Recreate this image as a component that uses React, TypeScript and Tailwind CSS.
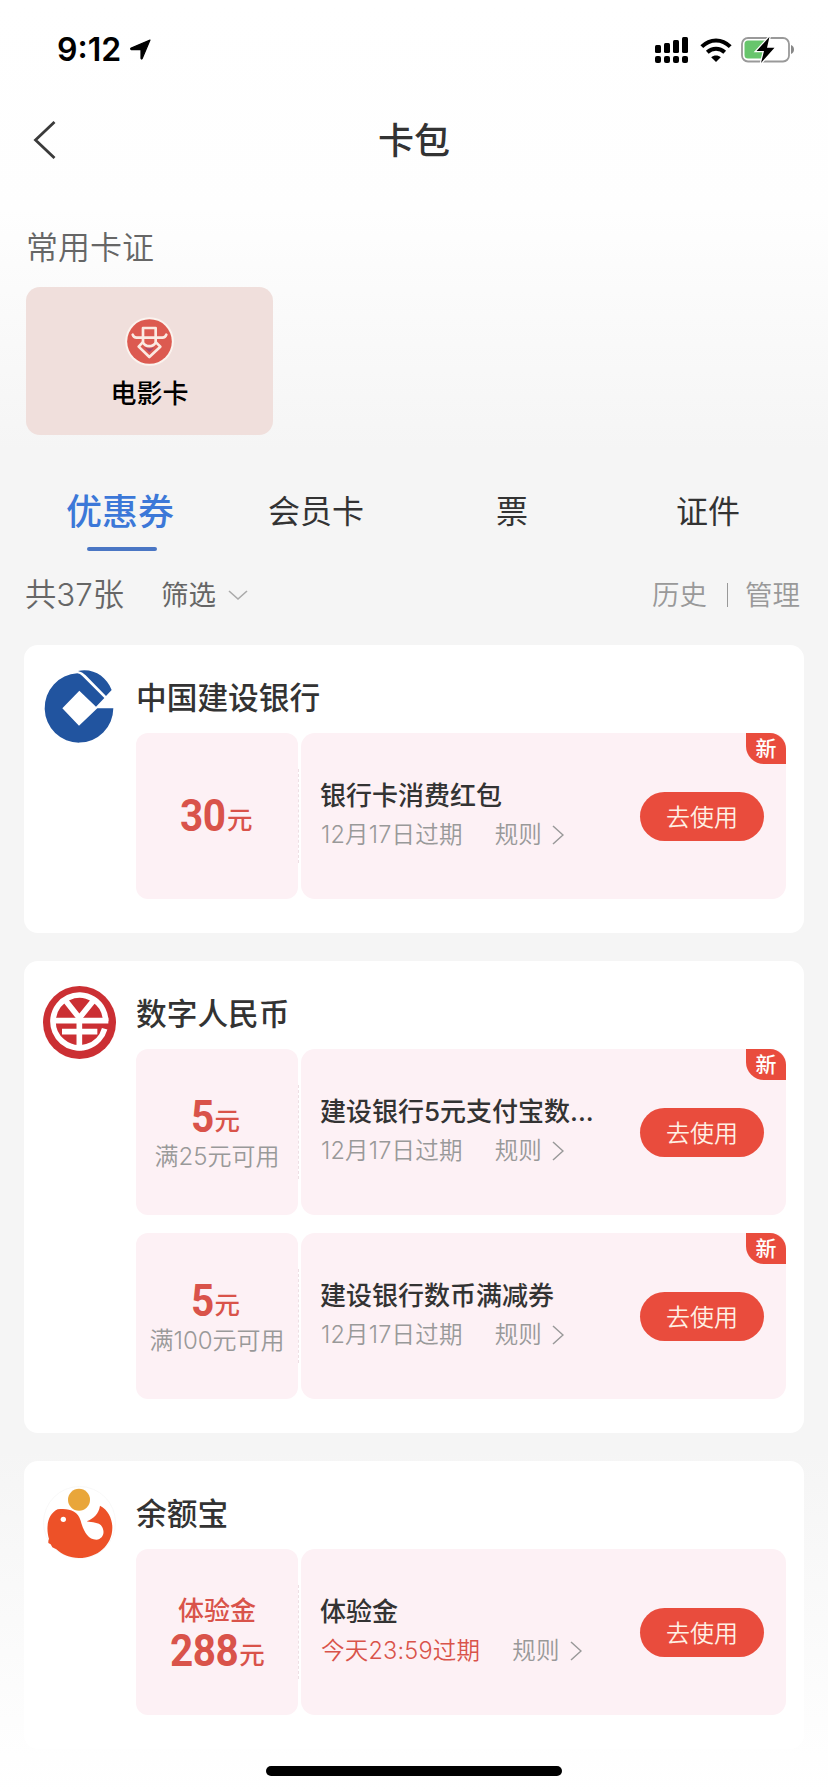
import type { ReactNode } from 'react'

type Coupon = {
  amount: string
  label?: string
  limit?: string
  title: string
  expire: string
  urgent?: boolean
  isNew?: boolean
}

type Group = {
  name: string
  logo: ReactNode
  coupons: Coupon[]
}

const tabs = ['优惠券', '会员卡', '票', '证件']

const groups: Group[] = [
  {
    name: '中国建设银行',
    logo: <BankLogo />,
    coupons: [{ amount: '30', title: '银行卡消费红包', expire: '12月17日过期', isNew: true }],
  },
  {
    name: '数字人民币',
    logo: <RmbLogo />,
    coupons: [
      { amount: '5', limit: '满25元可用', title: '建设银行5元支付宝数...', expire: '12月17日过期', isNew: true },
      { amount: '5', limit: '满100元可用', title: '建设银行数币满减券', expire: '12月17日过期', isNew: true },
    ],
  },
  {
    name: '余额宝',
    logo: <WhaleLogo />,
    coupons: [{ amount: '288', label: '体验金', title: '体验金', expire: '今天23:59过期', urgent: true }],
  },
]

export default function App() {
  return (
    <div className="relative w-[828px] h-[1792px] overflow-hidden bg-[linear-gradient(180deg,#ffffff_0px,#fefefe_210px,#f5f5f5_450px,#f5f5f5_1450px,#fdfdfd_1720px,#ffffff_1792px)] font-['Inter','Noto_Sans_CJK_SC',sans-serif] text-[#333]">
      <StatusBar />

      {/* 导航栏 */}
      <header className="grid h-[84px] grid-cols-[1fr_auto_1fr] items-center px-[33px]">
        <svg className="w-6 h-[38px]" viewBox="0 0 24 38" fill="none" stroke="#3a3a3a" strokeWidth={2.8}>
          <path d="M21.5 1 2.5 19l19 18" />
        </svg>
        <h1 className="pt-[2px] text-[36px] leading-[44px] font-medium">卡包</h1>
      </header>

      {/* 常用卡证 */}
      <section className="pt-[46px] pl-[26px]">
        <h2 className="text-[32px] leading-10 font-[350] text-[#666]">常用卡证</h2>
        <div className="mt-[19px] flex h-[148px] w-[247px] flex-col items-center rounded-[14px] bg-[#f0dfdc] pt-[30px]">
          <MovieIcon />
          <span className="mt-[11px] text-[26px] leading-[34px] font-medium text-black">电影卡</span>
        </div>
      </section>

      {/* 分类标签 */}
      <nav className="mx-[22px] mt-[57px] grid h-[59px] grid-cols-4">
        {tabs.map((tab, i) => (
          <div key={tab} className="flex flex-col items-center">
            {i === 0 ? (
              <>
                <span className="text-[36px] leading-10 font-medium text-[#3c78d8]">{tab}</span>
                <span className="mt-[15px] ml-1 h-1 w-[70px] shrink-0 rounded-full bg-[#4a76c4]" />
              </>
            ) : (
              <span className="text-[32px] leading-10">{tab}</span>
            )}
          </div>
        ))}
      </nav>

      <div className="mt-6 flex h-10 items-center pr-[28px] pl-[25px] text-[#666]">
        <span className="text-[31.3px] leading-10 font-[350]">共37张</span>
        <span className="ml-[37px] text-[27.5px] leading-10">筛选</span>
        <svg className="ml-3 w-[20px] h-3" viewBox="0 0 20 12" fill="none" stroke="#aaa" strokeWidth={1.6}>
          <path d="m1 2 9 8 9-8" />
        </svg>
        <div className="ml-auto flex items-center text-[27.5px] leading-10 font-[350] text-[#999]">
          <span>历史</span>
          <span className="mr-[17px] ml-5 h-6 w-px bg-[#999]" />
          <span>管理</span>
        </div>
      </div>

      <main className="mt-[30px] flex flex-col gap-7 px-6">
        {groups.map((group) => (
          <section key={group.name} className="flex rounded-[14px] bg-white pt-6 pr-[18px] pb-[34px] pl-[19px]">
            <div className="w-[93px] shrink-0 pt-px">{group.logo}</div>
            <div className="flex-1">
              <h3 className="h-16 pt-[9px] text-[30.7px] leading-10 font-medium">{group.name}</h3>
              <div className="flex flex-col gap-[18px]">
                {group.coupons.map((coupon) => (
                  <CouponItem key={coupon.title} coupon={coupon} />
                ))}
              </div>
            </div>
          </section>
        ))}
      </main>

      <div className="absolute bottom-4 left-[266px] h-[10px] w-[296px] rounded-full bg-black" />
    </div>
  )
}

function CouponItem({ coupon }: { coupon: Coupon }) {
  return (
    <div className="relative flex h-[166px]">
      <div className="flex w-[162px] flex-col items-center justify-center rounded-[12px] bg-[#fdf1f5] text-[#d9534a]">
        {coupon.label && <span className="pt-[6px] text-[26px] leading-8 font-medium">{coupon.label}</span>}
        <div className="flex items-baseline pt-[5px] pr-[5px] leading-[38px]">
          <span className="origin-right scale-x-92 font-[Roboto] text-[44px] font-bold tracking-[-0.5px]">
            {coupon.amount}
          </span>
          <span className="ml-px -translate-y-[2px] text-[25.5px] font-medium">元</span>
        </div>
        {coupon.limit && (
          <span className="text-[24px] leading-[30px] font-[350] text-[#999]">{coupon.limit}</span>
        )}
      </div>

      {/* 虚线 */}
      <div className="my-9 w-[3px] border-l border-dashed border-[#eedfe4]" />

      <div className="flex flex-1 items-center rounded-[14px] bg-[#fdf1f5] pr-[22px] pl-[19px]">
        <div>
          <p className="text-[26px] leading-[38px] font-medium">{coupon.title}</p>
          <div className="flex items-center pl-px text-[23.5px] leading-10 font-[350] tracking-[0.2px] text-[#999]">
            <span className={coupon.urgent ? 'text-[#d9534a]' : ''}>{coupon.expire}</span>
            <span className="ml-8">规则</span>
            <svg className="ml-[10px] w-3 h-5" viewBox="0 0 12 20" fill="none" stroke="#999" strokeWidth={1.5}>
              <path d="m1 1 10 9-10 9" />
            </svg>
          </div>
        </div>
        <button className="ml-auto h-[49px] w-[124px] rounded-full bg-[#e94c3d] pt-[2px] text-[24px] leading-[47px] font-[350] text-[#fff0e4]">
          去使用
        </button>
      </div>

      {coupon.isNew && (
        <span className="absolute top-0 right-0 h-[31px] w-10 rounded-tr-[16px] rounded-bl-[18px] bg-[#e94c3d] pt-px text-center text-[21px] leading-[30px] font-medium text-white">
          新
        </span>
      )}
    </div>
  )
}

function StatusBar() {
  return (
    <div className="flex h-[98px] items-center pt-px pr-[33px] pl-[57px] text-black">
      <span className="text-[32px] leading-10 font-semibold">9:12</span>
      <svg className="ml-[9px] w-[21px] h-[21px]" viewBox="0 0 21 21" stroke="black" strokeWidth="1.2" strokeLinejoin="round">
        <path d="M20 1 12.200 19.600c-.3.700-1.200.500-1.200-.3v-8.700H1.400c-.9-.2-1-1.100-.2-1.500Z" />
      </svg>

      <div className="ml-auto flex items-center">
        <svg className="w-[33px] h-[26px]" viewBox="0 0 33 26">
          <rect x="0" y="8" width="6" height="8" rx="1.5" />
          <rect x="9" y="6" width="6" height="10" rx="1.5" />
          <rect x="18" y="3" width="6" height="13" rx="1.5" />
          <rect x="27" y="0" width="6" height="16" rx="1.5" />
          <rect x="0" y="19" width="6" height="7" rx="2" />
          <rect x="9" y="19" width="6" height="7" rx="2" />
          <rect x="18" y="19" width="6" height="7" rx="2" />
          <rect x="27" y="19" width="6" height="7" rx="2" />
        </svg>
        <svg className="ml-3 w-8 h-6" viewBox="0 0 32 24" fill="none" stroke="black" strokeWidth={4}>
          <path d="M1.800 8.600C10 .3 22 .3 30.200 8.600" />
          <path d="M7.300 14.200c5-4.700 12.400-4.700 17.400 0" />
          <path d="M16 24l-4.800-4.700c2.700-2.300 6.900-2.300 9.600 0Z" fill="black" stroke="none" />
        </svg>
        <svg className="ml-[9px] w-[54px] h-[27px]" viewBox="0 0 54 27">
          <rect x="1" y="2" width="47" height="23.500" rx="6" fill="none" stroke="#999" strokeWidth="1.800" />
          <path d="M50 9c4 1 4 8 0 9Z" fill="#888" />
          <path d="M7 4.500h17v18H7a3.500 3.500 0 0 1-3.500-3.500V8A3.500 3.500 0 0 1 7 4.500Z" fill="#67c56c" />
          <path
            d="M28.500.8 15.500 15H23l-3 12L33.500 11.700H26L28.500.8Z"
            fill="black"
            stroke="white"
            strokeWidth="2.500"
            paintOrder="stroke"
          />
        </svg>
      </div>
    </div>
  )
}

function MovieIcon() {
  return (
    <svg className="w-[49px] h-[49px]" viewBox="0 0 147 147">
      <circle cx="73.500" cy="73.500" r="73" fill="#fbf3ee" />
      <circle cx="73.500" cy="73.500" r="67" fill="#dc5a50" />
      <g fill="none" stroke="#fbeae2" strokeWidth="8" strokeLinejoin="round" strokeLinecap="round">
        <path d="M23 53c2 6 6 9 12 9h77c6 0 10-3 12-9" />
        <path d="M54 77V33h38v44c-8 14-30 14-38 0Z" />
        <path d="m53 76-12 13 32 31 33-31-13-13" />
      </g>
      <path d="M57 89c8 7 25 7 33 0l-17 17Z" fill="#a4486e" />
    </svg>
  )
}

function BankLogo() {
  return (
    <svg className="w-[73px] h-[73px]" viewBox="0 0 219 219" fill="#21549f">
      <path d="M103 10A103 104 0 1 0 211 115H163L108 167 58 115l51-53 50 48 25-26-66-66q-7-8-15-8Z" />
      <path d="M105 3c46-9 84 15 101 57l-17 18-61-62Q118 6 105 3Z" />
    </svg>
  )
}

function RmbLogo() {
  return (
    <svg className="w-[73px] h-[73px]" viewBox="0 0 219 219">
      <circle cx="109.500" cy="109.500" r="109.500" fill="#cb2f33" />
      <g fill="none" stroke="white" strokeWidth="17">
        <path d="M31 104h165" />
        <path d="M57 137h106" />
        <path d="M109 95v98" />
        <path d="m68 44 41 52 42-52" />
        <path d="M188 106A79 79 0 1 0 185 128" />
      </g>
    </svg>
  )
}

function WhaleLogo() {
  return (
    <svg className="w-[73px] h-[73px]" viewBox="0 0 219 219">
      <circle cx="109.500" cy="109.500" r="108" fill="none" stroke="#f4f4f4" strokeWidth="2" />
      <circle cx="108" cy="41" r="33" fill="#e9a63a" />
      <path
        d="M44 70c34-4 60 4 69 34 8 30 21 57 47 57 20-2 27-22 17-39-7-13-28-12-46-16 22-10 36-22 40-47 26 13 37 41 37 66 0 53-46 91-100 91-28 0-52-11-68-26l-12-6-5-9-7-4c0-6 0-9 2-12-10-34-5-74 26-89Z"
        fill="#ed5128"
      />
      <circle cx="61" cy="100" r="8" fill="white" />
    </svg>
  )
}
